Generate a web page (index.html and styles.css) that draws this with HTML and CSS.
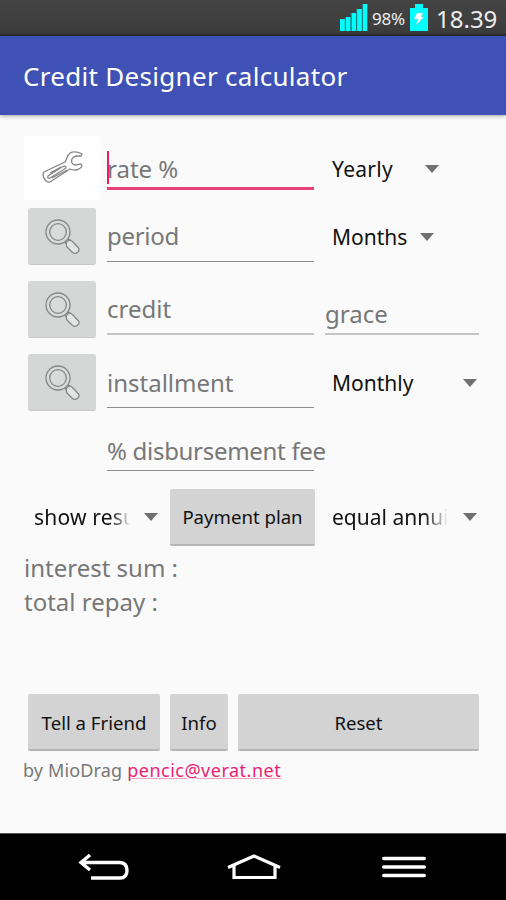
FILE: index.html
```
<!DOCTYPE html>
<html lang="en">
<head>
    <meta charset="UTF-8">
    <title>Credit Designer calculator</title>
    <link rel="stylesheet" href="styles.css">
</head>
<body>
    <svg width="0" height="0" class="defs">
        <symbol id="magnifier" viewBox="0 0 36 36">
            <g fill="none" stroke="#858786" stroke-width="1.3">
                <path d="M21.3 23.6 L24.3 20.6 L27.5 22.5 L33.5 29 C35.5 32 31 36 27.5 33.5 L21.5 27.5 Z" fill="#e3e4e4"/>
                <path d="M19.5 23 L21.6 25 M22.8 19.8 L25 21.4"/>
                <circle cx="13" cy="13" r="12" fill="#d9dbda"/>
                <circle cx="13" cy="13" r="8.3"/>
            </g>
        </symbol>
    </svg>

    <div class="status-bar">
        <svg width="28" height="28" viewBox="0 0 28 28">
            <path d="M0 15h5v12H0zM5.7 13h5v14h-5zM11.3 9h5v18h-5zM17 5h5v22h-5zM22.7 0h4.6v27h-4.6z" fill="#0ff"/>
            <path d="M5.3 13v14M11 9v18M16.7 5v22M22.3 1v26" stroke="#127f82" stroke-width="1"/>
        </svg>
        <span class="battery-level">98%</span>
        <svg class="battery" width="18" height="27" viewBox="0 0 18 27">
            <path d="M0 4h5V0h8v4h5v23H0z" fill="#0ff"/>
            <path d="M7 9h6l-2 4h3l-8 8 2-6H4z" fill="#fff" stroke="#8cc" stroke-width=".5"/>
        </svg>
        <span class="clock">18.39</span>
    </div>
    <div class="app-bar"><h1>Credit Designer calculator</h1></div>

    <form class="calculator">
        <div class="row row-rate">
            <div class="tool">
                <svg width="44" height="34" viewBox="0 0 44 34" fill="none" stroke="#858585" stroke-width="1.3">
                    <path d="M2 23 Q2 21 5 20 L24 11 C26 8 26 4 29 2 C33 0 37 1 41 3 L40 5 L35 5 C31 6 30 9 31 12 C33 15 36 14 40 13 L41 15 C39 19 34 20 29 18 L9 31 C6 32 2 28 2 23 Z"/>
                    <path d="M7 25 L21 16 Q25 14 25 17 L9 27 Q6 28 7 25 Z M9 22 L20 16 M11 27 L26 19"/>
                </svg>
            </div>
            <div class="field active"><span class="cursor"></span>rate %</div>
            <div class="spinner yearly"><span>Yearly</span><i class="arrow"></i></div>
        </div>
        <div class="row row-period">
            <button type="button" class="icon-button"><svg width="36" height="36"><use href="#magnifier"/></svg></button>
            <div class="field">period</div>
            <div class="spinner months"><span>Months</span><i class="arrow"></i></div>
        </div>
        <div class="row row-credit">
            <button type="button" class="icon-button"><svg width="36" height="36"><use href="#magnifier"/></svg></button>
            <div class="field">credit</div>
            <div class="field grace">grace</div>
        </div>
        <div class="row row-installment">
            <button type="button" class="icon-button"><svg width="36" height="36"><use href="#magnifier"/></svg></button>
            <div class="field">installment</div>
            <div class="spinner monthly"><span>Monthly</span><i class="arrow"></i></div>
        </div>
        <div class="row row-fee">
            <div></div>
            <div class="field">% disbursement fee</div>
        </div>
        <div class="actions">
            <div class="spinner results"><span class="fade">show results</span><i class="arrow"></i></div>
            <button type="button" class="button plan">Payment plan</button>
            <div class="spinner annuity"><span class="fade">equal annuity</span><i class="arrow"></i></div>
        </div>
        <div class="summary">
            <div>interest sum :</div>
            <div>total repay :</div>
        </div>
        <div class="buttons">
            <button type="button" class="button tell">Tell a Friend</button>
            <button type="button" class="button info">Info</button>
            <button type="reset" class="button reset">Reset</button>
        </div>
        <div class="author">by MioDrag <a href="mailto:pencic@verat.net">pencic@verat.net</a></div>
    </form>

    <div class="nav-bar">
        <svg width="52" height="30" viewBox="0 0 52 30" fill="none" stroke="#fff" stroke-width="3.4">
            <path d="M12 2 L3 9.5 L12 17 M4 9.5 H42 Q49 10 49 17.2 Q49 25 42 25 H13"/>
        </svg>
        <svg width="54" height="30" viewBox="0 0 54 30" fill="none" stroke="#fff" stroke-width="3.2">
            <path d="M1 14.5 L27 3 L53 14.5 M7 12 V24.5 H48 V12"/>
        </svg>
        <svg width="44" height="30" viewBox="0 0 44 30" stroke="#fff" stroke-width="3.6" stroke-linecap="round">
            <path d="M1.8 5.5H42.2M1.8 14H42.2M1.8 22.5H42.2"/>
        </svg>
    </div>
</body>
</html>
```
FILE: styles.css
```
* { box-sizing: border-box; }
body { margin: 0; height: 900px; display: flex; flex-direction: column; overflow: hidden; background-color: #fafafa; color: #111; font-family: "Noto Sans", sans-serif; }
button { font-family: inherit; }
.defs { position: absolute; }

.status-bar { height: 36px; flex: none; display: flex; align-items: flex-start; justify-content: flex-end; padding: 4px 9px 0 0; background: linear-gradient(#444, #3c3c3c 90%, #282828); color: #eee; }
.battery-level { font-size: 17px; line-height: 29px; margin-left: 4px; width: 38px; letter-spacing: -0.2px; }
.battery { margin-right: 8px; }
.clock { font-size: 24px; line-height: 29px; width: 61px; white-space: nowrap; }
.app-bar { height: 79px; flex: none; padding-left: 23px; background-color: #3f51b5; box-shadow: 0 1px 4px rgba(0, 0, 0, 0.35); }
.app-bar h1 { margin: 0; font-size: 26px; line-height: 80px; font-weight: 400; letter-spacing: 0.3px; color: #fff; white-space: nowrap; }

.calculator { flex: 1; padding: 21px 27px 0 24px; }
.row { display: grid; grid-template-columns: 83px 207px 154px; align-items: end; }
.row > :nth-child(3) { margin-left: 11px; }
.row-rate { height: 64px; }
.row-period, .row-credit, .row-installment { height: 73px; }
.row-fee { height: 62px; }

.tool { width: 77px; height: 64px; background-color: #fff; display: flex; align-items: center; justify-content: center; }
.icon-button { width: 68px; height: 57px; margin: 0 0 8px 4px; padding: 2px 0 0 2px; border: none; border-bottom: 1px solid #c6c8c7; border-radius: 3px; background-color: #d5d7d6; display: flex; align-items: center; justify-content: center; }

.field { position: relative; border-bottom: 1.6px solid #8d8d8d; margin-bottom: 11px; white-space: nowrap; font-size: 24px; color: #777; line-height: 48px; }
.field.active { border-bottom: 3px solid #ec407a; margin-bottom: 10px; line-height: 37px; }
.cursor { position: absolute; left: 0; top: 1px; width: 2px; height: 33px; background-color: #e91e63; }
.row-period .field { line-height: 50px; letter-spacing: -0.3px; }
.row-credit .field { border-bottom: 2px solid #c4c4c4; }
.row-credit .grace { width: 154px; line-height: 38px; }
.row-fee .field { line-height: 38px; margin-bottom: 10px; letter-spacing: -0.3px; }

.spinner { display: flex; align-items: center; justify-content: space-between; height: 56px; padding-left: 7px; font-size: 21px; white-space: nowrap; }
.arrow { border: 7px solid transparent; border-top: 8px solid #707070; border-bottom: none; }
.yearly { width: 114px; margin-bottom: 3px; letter-spacing: 0.3px; }
.months { width: 109px; margin-bottom: 8px; }
.monthly { width: 152px; margin-bottom: 8px; }
.fade { overflow: hidden; -webkit-mask-image: linear-gradient(90deg, #000 80%, transparent); mask-image: linear-gradient(90deg, #000 80%, transparent); }

.actions { height: 72px; display: flex; align-items: center; }
.results { width: 134px; margin-right: 12px; padding-left: 10px; letter-spacing: 0.2px; }
.results .fade { width: 97px; }
.annuity { width: 162px; padding-left: 17px; }
.annuity .fade { width: 116px; }
.button { height: 57px; flex: none; padding: 1px 0 0; border: none; border-bottom: 2px solid #b5b5b5; border-radius: 2px; background-color: #d3d3d3; color: #111; font-size: 18.6px; white-space: nowrap; }
.plan { width: 145px; }

.summary { font-size: 24px; line-height: 34px; color: #777; height: 143px; margin-top: -2px; }
.buttons { display: flex; gap: 10px; padding-left: 4px; }
.tell { width: 132px; }
.info { width: 58px; }
.reset { width: 241px; }
.author { font-size: 18px; line-height: 38px; color: #777; white-space: nowrap; letter-spacing: 0.15px; margin-left: -1px; }
.author a { letter-spacing: 0.5px; color: #e91e73; text-decoration-color: #f4a0bd; }

.nav-bar { height: 67px; flex: none; display: flex; align-items: center; padding: 2px 0 0 78px; background-color: #000; border-top: 1px solid #555; }
.nav-bar svg:nth-child(2) { margin-left: 97px; }
.nav-bar svg:nth-child(3) { margin-left: 101px; }
```
